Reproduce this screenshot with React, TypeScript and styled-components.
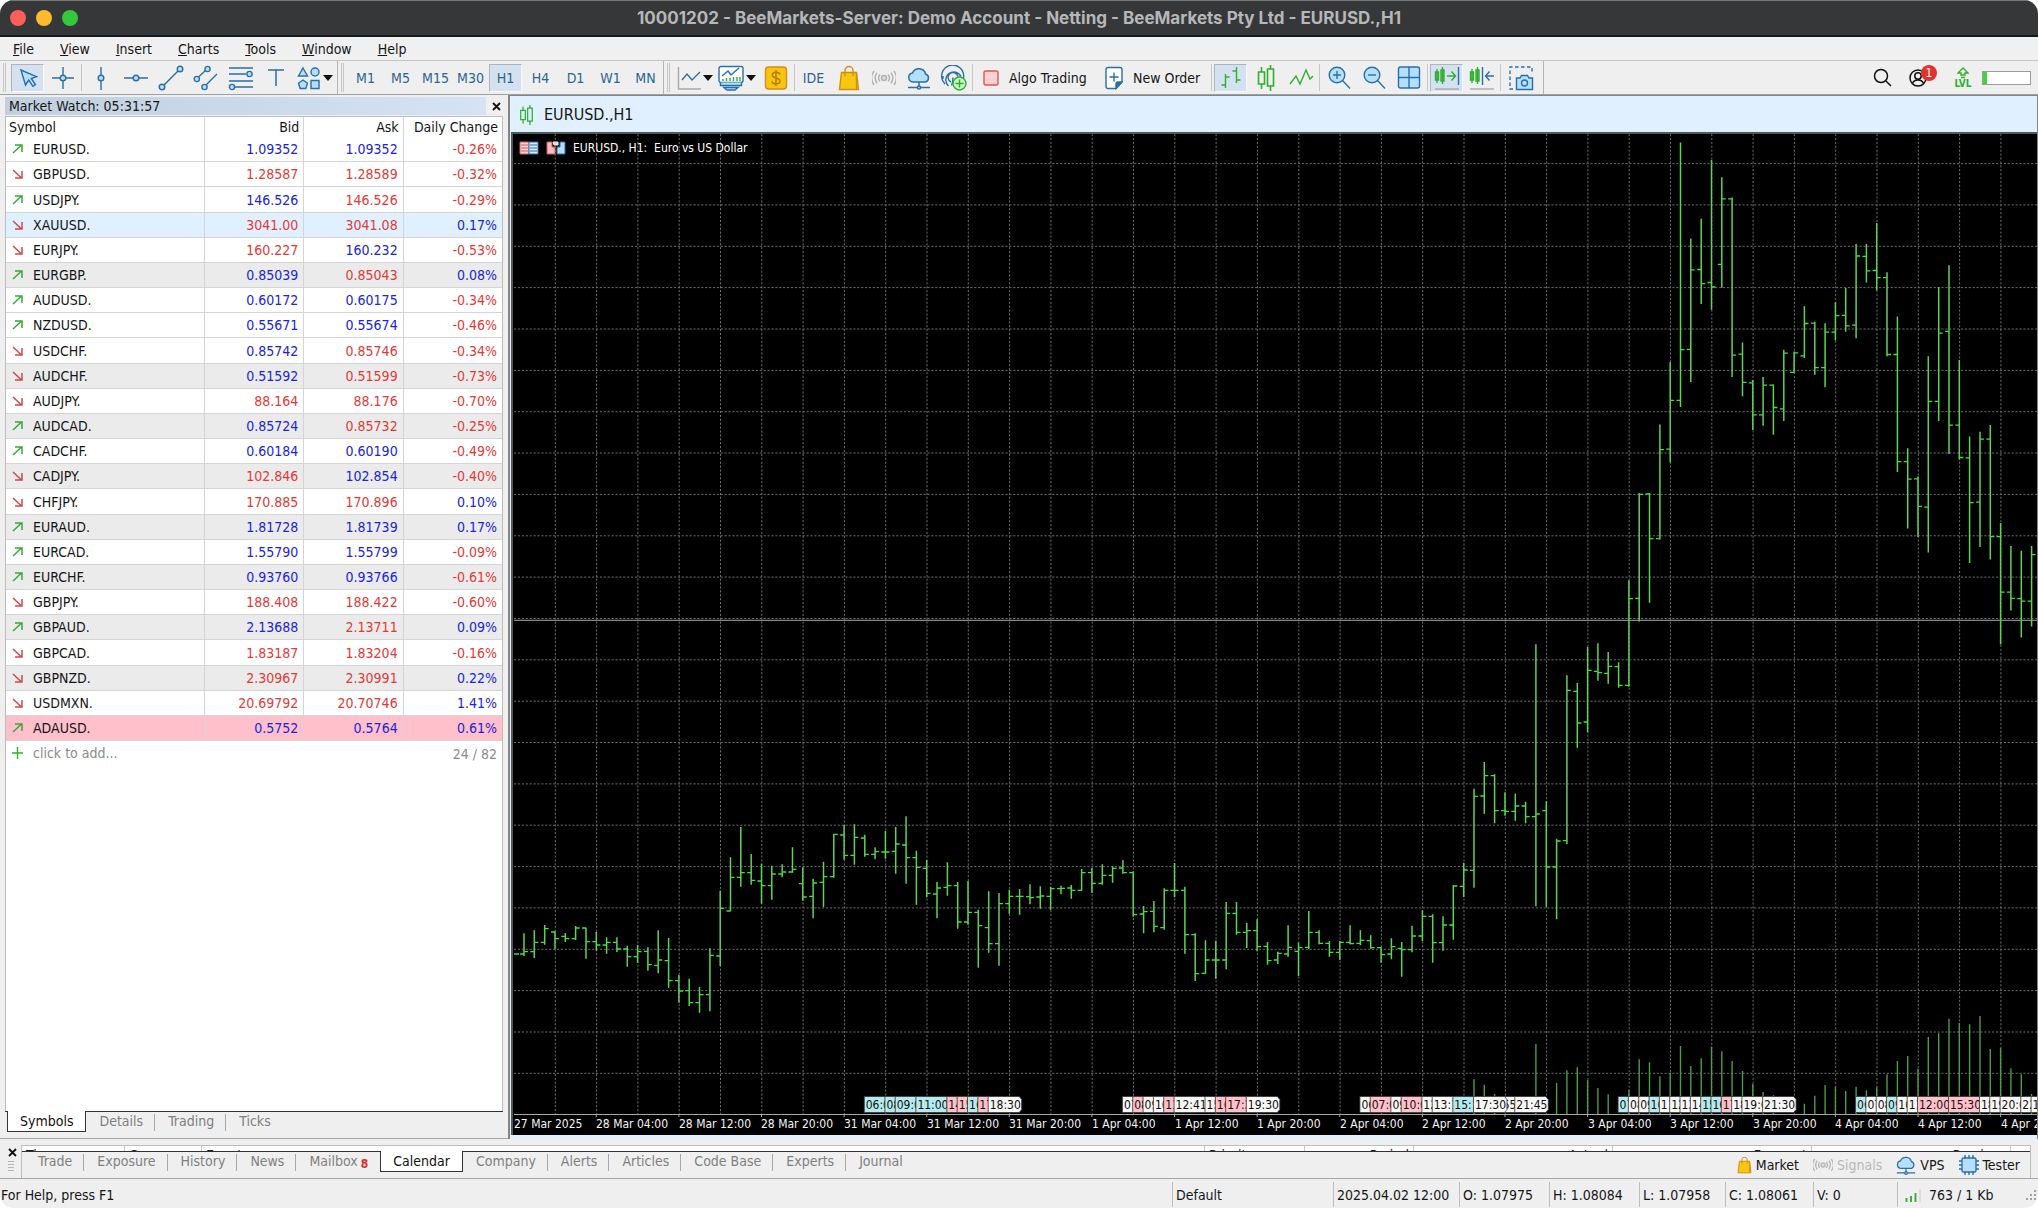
import React from "react";
import styled, { createGlobalStyle, css } from "styled-components";

const UI_FONT = `"DejaVu Sans Condensed", "Noto Sans", sans-serif`;
const BLUE = "#2a6fa8";
const SKY = "#b5e0fd";
const GREEN = "#2fae2f";
const LINE = "#b4b4b4";
const CHROME = "#efefef";

const GlobalStyle = createGlobalStyle`
  *, *::before, *::after { box-sizing: border-box; }
  body { margin: 0; background: #fff; }
  button, input { font: inherit; color: inherit; }
  svg { display: block; flex: none; }
`;

const Window = styled.div`
  display: flex;
  flex-direction: column;
  height: 100vh;
  overflow: hidden;
  border-radius: 14px;
  background: ${CHROME};
  color: #161616;
  font-family: ${UI_FONT};
  font-size: 14px;
  line-height: 18px;
`;

/* ---------- title bar ---------- */

const TitleBar = styled.header`
  display: grid;
  grid-template-columns: 1fr auto 1fr;
  align-items: center;
  height: 37px;
  padding: 0 10px;
  background: #363739;
  border-top: 1px solid #77797b;
  border-bottom: 2px solid #15191c;
`;

const Lights = styled.div`
  display: flex;
  gap: 10px;
`;

const Light = styled.button<{ $c: string }>`
  width: 16px;
  height: 16px;
  padding: 0;
  border: 0;
  border-radius: 50%;
  background: ${(p) => p.$c};
`;

const Title = styled.h1`
  margin: 0;
  font: 700 17px/20px Inter, sans-serif;
  color: #b6b7b8;
`;

/* ---------- menu ---------- */

const MenuBar = styled.nav`
  display: flex;
  height: 24px;
  align-items: center;
  padding-left: 1px;
  background: #f0f0f0;
  border-bottom: 1px solid #c4c4c4;
`;

const MenuItem = styled.button`
  border: 0;
  background: none;
  padding: 0 12px;
  height: 22px;
  margin-right: 2px;
  &::first-letter { text-decoration: underline; }
`;

/* ---------- toolbar ---------- */

const Toolbar = styled.div`
  display: flex;
  height: 34px;
  background: ${CHROME};
  border-bottom: 1px solid #a0a0a0;
`;

const ToolGroup = styled.div<{ $lead: number; $tail: number }>`
  display: flex;
  align-items: center;
  padding-left: ${(p) => p.$lead}px;
  padding-right: ${(p) => p.$tail}px;
  border-right: 1px solid ${LINE};
  background: linear-gradient(#c4c4c4, #c4c4c4) 3px 2px / 1px 29px no-repeat,
    linear-gradient(#c4c4c4, #c4c4c4) 5px 2px / 1px 29px no-repeat;
`;

const Tool = styled.button<{ $on?: boolean; $w?: number; $left?: boolean }>`
  display: flex;
  align-items: center;
  justify-content: ${(p) => (p.$left ? "flex-start" : "center")};
  gap: ${(p) => (p.$left ? 10 : 2)}px;
  width: ${(p) => p.$w ?? 33}px;
  height: 28px;
  margin: 0 1px;
  padding: 0 ${(p) => (p.$left ? 7 : 0)}px;
  border: 1px solid transparent;
  background: none;
  white-space: nowrap;
  ${(p) =>
    p.$on &&
    css`
      background: #d3e1f1;
      border-color: #b0b4b8 #f8f8f8 #f8f8f8 #b0b4b8;
    `}
`;

const BlueTool = styled(Tool)`
  color: #2b6592;
`;

const Sep = styled.i`
  width: 1px;
  height: 27px;
  margin: 0 1px;
  background: #c6c6c6;
`;

const Caret = styled.i`
  border: 5px solid transparent;
  border-top: 6px solid #111;
  border-bottom: 0;
`;

const Account = styled.div`
  display: flex;
  align-items: center;
  margin-left: auto;
  padding-right: 7px;
`;

const AccountButton = styled.button<{ $gap: number }>`
  position: relative;
  padding: 0;
  border: 0;
  background: none;
  margin-right: ${(p) => p.$gap}px;
`;

const Badge = styled.span`
  position: absolute;
  left: 12px;
  top: -4px;
  width: 16px;
  height: 16px;
  border-radius: 50%;
  background: #e3322b;
  color: #fff;
  font-size: 12px;
  line-height: 16px;
  text-align: center;
`;

const Level = styled.button`
  display: flex;
  flex-direction: column;
  align-items: center;
  width: 20px;
  margin-right: 9px;
  padding: 0;
  border: 0;
  background: none;
  color: ${GREEN};
  font-size: 10px;
  font-weight: 700;
  line-height: 10px;
`;

const Meter = styled.progress`
  appearance: none;
  width: 49px;
  height: 14px;
  border: 1px solid #9c9c9c;
  background: #fff;
  &::-webkit-progress-bar { background: #fff; }
  &::-webkit-progress-value { background: #45d33c; }
`;

/* ---------- workspace ---------- */

const Workspace = styled.main`
  display: grid;
  grid-template-columns: 508px 1fr;
  flex: 1;
  min-height: 0;
`;

const Watch = styled.section`
  display: flex;
  flex-direction: column;
  min-height: 0;
  padding: 2px 5px 6px;
  border-bottom: 1px solid #a6a6a6;
`;

const WatchTitle = styled.div`
  display: flex;
  justify-content: space-between;
  height: 18px;
  margin-bottom: 1px;

  h2 {
    flex: 1;
    margin: 0;
    padding-left: 4px;
    font-size: 14px;
    line-height: 18px;
    font-weight: 400;
    background: linear-gradient(90deg, #c0d0df, #d5e3f4);
  }
`;

const Close = styled.button`
  display: grid;
  place-items: center end;
  width: 17px;
  padding: 0 2px 0 0;
  border: 0;
  background: none;
`;

const WatchBody = styled.div`
  flex: 1;
  min-height: 0;
  overflow: hidden;
  background: #fff;
  border: 1px solid #bdbdbd;
  border-width: 1px 1px 0 1px;
`;

const Quotes = styled.table`
  width: 100%;
  table-layout: fixed;
  border-collapse: separate;
  border-spacing: 0;

  col:first-child { width: 198px; }

  th {
    height: 20px;
    padding: 0 4px;
    font-weight: 400;
    text-align: right;
    border-left: 1px solid #d4d4d4;
    white-space: nowrap;
  }
  td {
    padding: 0 5px;
    text-align: right;
    border-left: 1px solid #d4d4d4;
    border-bottom: 1px solid #d4d4d4;
  }
  th:first-child, td:first-child { border-left: 0; text-align: left; }
  th:first-child { padding-left: 3px; }
  td:first-child { padding-left: 6px; }
`;

const QuoteRow = styled.tr<{ $bg: string }>`
  height: 25px;
  background: ${(p) => p.$bg};
  &:nth-child(6n + 3) { height: 26px; }
`;

const AddRow = styled.tr`
  height: 25px;
  color: #8a8a8a;
  && td { border: 0; }
  button { padding: 0; border: 0; background: none; }
`;

const Price = styled.td<{ $up: boolean }>`
  color: ${(p) => (p.$up ? "#2024d8" : "#e13a35")};
`;

const Symbol = styled.span`
  display: flex;
  align-items: center;
  gap: 10px;
`;

/* ---------- tabs ---------- */

const TabStrip = styled.div<{ $inset: number }>`
  display: flex;
  height: 21px;
  padding-left: ${(p) => p.$inset}px;
  border-top: 1px solid #333;
`;

const Tab = styled.button<{ $on?: boolean; $sep?: boolean }>`
  position: relative;
  display: flex;
  gap: 3px;
  height: 21px;
  margin-top: -1px;
  padding: 0 12px 0 13px;
  border: 0;
  background: none;
  color: #808080;
  line-height: 20px;
  white-space: nowrap;
  ${(p) =>
    p.$sep &&
    css`
      &::after {
        content: "";
        position: absolute;
        right: 0;
        top: 3px;
        width: 1px;
        height: 17px;
        background: #a8a8a8;
      }
    `}
  ${(p) =>
    p.$on &&
    css`
      padding: 0 12px;
      background: #fff;
      color: #111;
      border: 1px solid #333;
      border-top: 0;
    `}
`;

const MailCount = styled.b`
  color: #dd2a2a;
  font-size: 12px;
  line-height: 26px;
`;

/* ---------- chart window ---------- */

const ChartWindow = styled.section`
  display: flex;
  flex-direction: column;
  min-width: 0;
  min-height: 0;
  border: 1px solid #858585;
  border-width: 1px 1px 0 2px;
  background: #e0f0fe;
`;

const ChartHead = styled.div`
  display: flex;
  align-items: center;
  gap: 10px;
  height: 36px;
  padding: 2px 0 0 9px;

  h2 {
    margin: 0;
    font-size: 16px;
    line-height: 20px;
    font-weight: 400;
  }
`;

const ChartBody = styled.div`
  position: relative;
  flex: 1;
  min-height: 0;
  margin: 0 0 4px 1px;
  overflow: hidden;
  background: #000;
  border: solid #50585a;
  border-width: 2px 0 0 2px;
`;

const ChartSvg = styled.svg`
  width: 100%;
  height: 100%;
`;

const ChartCaption = styled.div`
  position: absolute;
  left: 6px;
  top: 5px;
  display: flex;
  align-items: center;
  gap: 7px;
  color: #fff;
  font-size: 12px;
  line-height: 18px;
  white-space: pre;
`;

/* ---------- toolbox dock ---------- */

const Dock = styled.section`
  display: grid;
  grid-template-columns: 21px 1fr;
  height: 40px;
  padding: 6px 7px 0 0;
  border-bottom: 1px solid #a6a6a6;
`;

const DockSide = styled.div`
  display: flex;
  flex-direction: column;
  align-items: center;
  gap: 3px;
  padding-top: 3px;
`;

const DockMain = styled.div`
  min-width: 0;
  border: solid #bdbdbd;
  border-width: 1px 1px 0 1px;
`;

const Peek = styled.div`
  display: grid;
  grid-template-columns: 103px 77px 1fr 100px 109px 199px 199px 199px 19px;
  height: 5px;
  overflow: hidden;
  background: #fff;
`;

const PeekCell = styled.span<{ $right?: boolean }>`
  padding: 0 4px;
  text-align: ${(p) => (p.$right ? "right" : "left")};
  border-right: 1px solid #c8c8c8;
`;

const DockRow = styled.div`
  display: flex;
  justify-content: space-between;
  border-top: 1px solid #333;
`;

const DockTabs = styled(TabStrip)`
  border-top-color: transparent;
  margin-top: -1px;
`;

const DockLinks = styled.div`
  display: flex;
  align-items: center;
  gap: 14px;
  padding-right: 10px;
  height: 26px;
`;

const DockLink = styled.button<{ $off?: boolean }>`
  display: flex;
  align-items: center;
  gap: 4px;
  padding: 0;
  border: 0;
  background: none;
  color: ${(p) => (p.$off ? "#b8b8b8" : "#161616")};
`;

/* ---------- status bar ---------- */

const Status = styled.footer`
  display: grid;
  grid-template-columns: 1fr 161px 126px 90px 90px 86px 88px 84px 141px;
  height: 29px;
  padding: 3px 0 0 1px;
`;

const Cell = styled.span<{ $first?: boolean }>`
  display: flex;
  align-items: center;
  gap: 7px;
  height: 25px;
  padding-left: ${(p) => (p.$first ? 0 : 3)}px;
  border-left: ${(p) => (p.$first ? 0 : 1)}px solid #bdbdbd;
  white-space: nowrap;
`;

const LastCell = styled(Cell)`
  justify-content: space-between;
  padding-left: 7px;
  span { display: flex; align-items: center; gap: 7px; }
`;

/* ---------- icons ---------- */

const Icon = ({ w = 26, h = 26, children, c = BLUE, sw = 1.4 }: any) => (
  <svg width={w} height={h} viewBox={`0 0 ${w} ${h}`} fill="none" stroke={c} strokeWidth={sw} aria-hidden="true">
    {children}
  </svg>
);

const Cross = () => (
  <Icon w={9} h={9} c="#111" sw={1.8}><path d="M1 1l7 7M8 1l-7 7" /></Icon>
);
const Pointer = () => (
  <Icon><path d="M6 5l4.500 15 3.200-5 4.200 6.300 2.600-1.800-4.200-6 5.200-1.800z" fill={SKY} /></Icon>
);
const Crosshair = () => (
  <Icon><path d="M13 2v8M13 16v8M2 13h8M16 13h8" /><circle cx="13" cy="13" r="2.800" fill={SKY} /></Icon>
);
const VLine = () => (
  <Icon><path d="M13 2v8M13 16v9" /><circle cx="13" cy="13" r="2.800" fill={SKY} /></Icon>
);
const HLine = () => (
  <Icon><path d="M1 13h9M16 13h9" /><circle cx="13" cy="13" r="2.800" fill={SKY} /></Icon>
);
const Trend = () => (
  <Icon><path d="M6 20L20 6" /><circle cx="4" cy="22" r="2.800" fill={SKY} /><circle cx="22" cy="4" r="2.800" fill={SKY} /></Icon>
);
const Channel = () => (
  <Icon>
    <path d="M5 12.500l7.500-7M13 20L24 9" />
    <circle cx="3.800" cy="14" r="2.600" fill={SKY} /><circle cx="14.500" cy="4" r="2.600" fill={SKY} /><circle cx="11.500" cy="22" r="2.600" fill={SKY} />
  </Icon>
);
const Fibo = () => (
  <Icon>
    <path d="M1 3h24M1 9h17M1 16h24M7 22h18" /><circle cx="21.500" cy="9" r="2.600" fill={SKY} /><circle cx="4" cy="22" r="2.600" fill={SKY} />
  </Icon>
);
const TextTool = () => <Icon sw={1.5}><path d="M5 5h16M13 5v16" /></Icon>;
const Shapes = () => (
  <Icon w={24}>
    <g fill={SKY}>
      <path d="M6 3l4.500 8h-9z" /><circle cx="18" cy="7" r="4" /><path d="M6 15l4.500 3.200-1.700 5.300H3.200L1.500 18.200z" /><path d="M14 15.500h8v8h-8z" />
    </g>
  </Icon>
);
const LineStudy = () => (
  <Icon w={24}><path d="M1.500 2v22H24" stroke="#a8a8a8" /><path d="M5 15l5-6 5 6 8-8" /></Icon>
);
const Template = () => (
  <Icon w={26}>
    <rect x="1" y="1.500" width="24" height="16" rx="2" fill="#fff" />
    <path d="M4 11l6-5 3 4 8-7" />
    <path d="M5 16v-2M8.500 16v-3M12 16v-3M15.500 16v-4M19 16v-4M22 16v-4" stroke={GREEN} />
    <path d="M2.500 17.500v3h21v-3M6 22.500h14l-3 2.500H9z" fill={SKY} />
  </Icon>
);
const Dollar = () => (
  <Icon w={24}>
    <rect x="1.500" y="2" width="21" height="22" rx="3" fill="#f8c50c" stroke="#d19018" />
    <path d="M16 9.500c-.5-1.700-2-2.300-4-2.300-2.200 0-3.800 1-3.800 2.800C8.200 14 16 12 16 16c0 1.900-1.700 2.900-4 2.900s-3.800-.9-4.200-2.600M12 5v16" stroke="#b27a10" />
  </Icon>
);
const Bag = ({ w = 22, h = 26 }: { w?: number; h?: number }) => (
  <svg width={w} height={h} viewBox="0 0 22 26" fill="none" strokeWidth="1.4" stroke="#cf8f17" aria-hidden="true">
    <path d="M3.500 7.500h15l2 17h-19z" fill="#f9c80e" />
    <path d="M7 11V5.500a4 4 0 0 1 8 0V11" />
    <path d="M18.500 8v16" />
  </svg>
);
const Signal = ({ w = 24 }: { w?: number }) => (
  <svg width={w} height={w} viewBox="0 0 24 24" fill="none" stroke="#b4b4b4" strokeWidth="1.5" aria-hidden="true">
    <circle cx="12" cy="12" r="2.500" fill="#ddd" />
    <path d="M8 8.500a5.500 5.500 0 0 0 0 7M16 8.500a5.500 5.500 0 0 1 0 7M5 6.800a9 9 0 0 0 0 10.400M19 6.800a9 9 0 0 1 0 10.400M2 5a12 12 0 0 0 0 14M22 5a12 12 0 0 1 0 14" />
  </svg>
);
const Cloud = ({ w = 24 }: { w?: number }) => (
  <svg width={w} height={w} viewBox="0 0 24 24" fill="none" stroke={BLUE} strokeWidth="1.5" aria-hidden="true">
    <path d="M6 16a4.500 4.500 0 0 1-.6-8.900A7 7 0 0 1 18.600 8 4.200 4.200 0 0 1 18.500 16z" fill={SKY} />
    <path d="M12 16v4M1 21.500h9M14 21.500h9" /><circle cx="12" cy="21.500" r="1.600" fill={SKY} />
  </svg>
);
const Fingerprint = () => (
  <Icon>
    <path d="M4 19A11 11 0 1 1 22.500 13M7.500 21A8 8 0 1 1 20 11.500M10 17a5 5 0 1 1 7-5.500M12 12.500c0 4-.5 6-1.500 8M2 14V11" />
    <circle cx="18.500" cy="18.500" r="6.500" fill="#c9f5c2" stroke={GREEN} />
    <path d="M18.500 14.500v8M14.500 18.500h8" stroke={GREEN} />
  </Icon>
);
const Stop = () => (
  <Icon w={16} h={16}><rect x="1" y="1" width="14" height="14" rx="1.500" fill="#fcd0d0" stroke="#d95656" /></Icon>
);
const Order = () => (
  <Icon w={18} h={24}>
    <path d="M3 1.500h12a2 2 0 0 1 2 2V16l-6 6.500H3a2 2 0 0 1-2-2v-17a2 2 0 0 1 2-2z" fill="#fff" />
    <path d="M17 16h-4a2 2 0 0 0-2 2v4.500z" fill={BLUE} /><path d="M9 6.500v9M4.500 11h9" />
  </Icon>
);
const BarsIcon = () => (
  <Icon c={GREEN}><path d="M7.500 9v14M7.500 12h4M3.500 20h4M18.500 2v16M14.500 6h4M18.500 15h4" /></Icon>
);
const Candles = ({ w = 20, h = 26 }: { w?: number; h?: number }) => (
  <svg width={w} height={h} viewBox="4 0 18 26" fill="none" stroke={GREEN} strokeWidth="1.600" aria-hidden="true">
    <path d="M8.500 2v5M8.500 19v5M17.500 0v4M17.500 21v5M5.500 7h6v12h-6zM14.500 4h6v17h-6z" />
  </svg>
);
const Zigzag = () => (
  <Icon c={GREEN}><path d="M2 19l6-8 4 8 6-14 4 9 3-3" /></Icon>
);
const Zoom = ({ plus }: { plus?: boolean }) => (
  <Icon><circle cx="11" cy="10" r="7.800" fill={SKY} /><path d="M16.500 15.500l7.500 8" /><path d={plus ? "M11 6v8M7 10h8" : "M7 10h8"} /></Icon>
);
const Tiles = () => (
  <Icon w={24}><rect x="1.500" y="2" width="21" height="21" rx="2" fill={SKY} /><path d="M12 2v21M1.500 12.500h21" /></Icon>
);
const ShiftEnd = () => (
  <Icon>
    <path d="M3 4v14M8.500 2v17M1.500 7h3v8h-3zM7 5h3v11H7z" stroke={GREEN} />
    <path d="M13 11h8M17.500 6.500l4 4.500-4 4.500" stroke={GREEN} /><path d="M24.500 2v18" /><path d="M1 24h24" stroke="#ababab" />
  </Icon>
);
const AutoScroll = () => (
  <Icon>
    <path d="M3 4v14M8.500 2v17M1.500 7h3v8h-3zM7 5h3v11H7z" stroke={GREEN} />
    <path d="M13.500 2v18M25 11h-8M20.500 6.500l-4 4.500 4 4.500" /><path d="M1 24h24" stroke="#ababab" />
  </Icon>
);
const Camera = () => (
  <Icon>
    <path d="M5 24H2V2h22v7" strokeDasharray="3.500 2.500" />
    <path d="M9 13h3l1.500-2.500h6L21 13h3.500v11.500H8.500V13z" fill={SKY} /><circle cx="16.500" cy="18" r="3" />
  </Icon>
);
const Chip = () => (
  <svg width="20" height="20" viewBox="0 0 20 20" fill="none" stroke={BLUE} strokeWidth="1.400" aria-hidden="true">
    <path d="M6 0v20M10 0v20M14 0v20M0 6h20M0 10h20M0 14h20" /><rect x="3" y="3" width="14" height="14" rx="1.500" fill={SKY} />
  </svg>
);
const UpArrow = ({ up }: { up: boolean }) => (
  <Icon w={11} h={10} c={up ? "#38a838" : "#cc4b4b"} sw={1.5}>
    {up ? <path d="M1 9L9.500 1M3 1h7v7" /> : <path d="M1 1l8.500 8M10 2v7H3" />}
  </Icon>
);

/* ---------- data ---------- */

// symbol, trend up, bid, bid up, ask, ask up, change, row colour
type Quote = [string, 0 | 1, string, 0 | 1, string, 0 | 1, string, string?];
const G = "#ebebeb";
const QUOTES: Quote[] = [
  ["EURUSD.", 1, "1.09352", 1, "1.09352", 1, "-0.26%"],
  ["GBPUSD.", 0, "1.28587", 0, "1.28589", 0, "-0.32%"],
  ["USDJPY.", 1, "146.526", 1, "146.526", 0, "-0.29%"],
  ["XAUUSD.", 0, "3041.00", 0, "3041.08", 0, "0.17%", "#e0f0fe"],
  ["EURJPY.", 0, "160.227", 0, "160.232", 1, "-0.53%"],
  ["EURGBP.", 1, "0.85039", 1, "0.85043", 0, "0.08%", G],
  ["AUDUSD.", 1, "0.60172", 1, "0.60175", 1, "-0.34%"],
  ["NZDUSD.", 1, "0.55671", 1, "0.55674", 1, "-0.46%"],
  ["USDCHF.", 0, "0.85742", 1, "0.85746", 0, "-0.34%"],
  ["AUDCHF.", 0, "0.51592", 1, "0.51599", 0, "-0.73%", G],
  ["AUDJPY.", 0, "88.164", 0, "88.176", 0, "-0.70%"],
  ["AUDCAD.", 1, "0.85724", 1, "0.85732", 0, "-0.25%", G],
  ["CADCHF.", 1, "0.60184", 1, "0.60190", 1, "-0.49%"],
  ["CADJPY.", 0, "102.846", 0, "102.854", 1, "-0.40%", G],
  ["CHFJPY.", 0, "170.885", 0, "170.896", 0, "0.10%"],
  ["EURAUD.", 1, "1.81728", 1, "1.81739", 1, "0.17%", G],
  ["EURCAD.", 1, "1.55790", 1, "1.55799", 1, "-0.09%"],
  ["EURCHF.", 1, "0.93760", 1, "0.93766", 1, "-0.61%", G],
  ["GBPJPY.", 0, "188.408", 0, "188.422", 0, "-0.60%"],
  ["GBPAUD.", 1, "2.13688", 1, "2.13711", 0, "0.09%", G],
  ["GBPCAD.", 0, "1.83187", 0, "1.83204", 0, "-0.16%"],
  ["GBPNZD.", 0, "2.30967", 0, "2.30991", 0, "0.22%", G],
  ["USDMXN.", 0, "20.69792", 0, "20.70746", 0, "1.41%"],
  ["ADAUSD.", 1, "0.5752", 1, "0.5764", 1, "0.61%", "#ffc0cb"],
];

// Runs of price bars: offset and scale of the run, then high, low, open, close per bar.
const RUNS: { top: number; k: number; bars: number[][] }[] = [
  {
    top: 780, k: 3, bars: [
      [460, 528, 522, 515], [451, 534, 515, 487], [435, 494, 487, 446], [454, 507, 456, 476], [459, 486, 469, 476],
      [438, 480, 476, 444], [443, 536, 444, 485], [456, 512, 485, 495], [472, 521, 495, 487], [472, 516, 487, 507],
      [497, 560, 507, 530], [495, 549, 530, 515], [502, 572, 514, 554], [451, 580, 556, 540], [474, 623, 542, 602],
      [585, 668, 602, 633], [596, 678, 632, 668], [621, 698, 668, 644], [505, 694, 644, 526], [332, 558, 528, 385],
      [232, 394, 393, 292], [141, 320, 292, 278], [222, 314, 278, 301], [251, 371, 303, 317], [257, 359, 317, 282],
      [253, 292, 282, 276], [202, 278, 276, 268], [262, 362, 311, 351], [296, 415, 349, 309], [245, 381, 307, 290],
      [162, 293, 290, 163], [135, 239, 165, 226], [133, 254, 226, 172], [164, 230, 174, 223], [202, 238, 223, 215],
      [153, 236, 216, 216], [141, 281, 214, 192], [109, 311, 195, 233], [212, 374, 233, 262], [240, 352, 265, 340],
      [306, 415, 342, 324], [247, 347, 322, 317], [306, 446, 317, 426], [303, 434, 426, 397], [389, 563, 397, 437],
      [334, 518, 443, 491], [339, 557, 491, 371], [329, 401, 371, 349], [327, 404, 349, 349],
    ],
  },
  {
    top: 760, k: 3, bars: [
      [373, 433, 410, 413], [379, 446, 411, 408], [380, 450, 409, 386], [377, 403, 386, 385], [375, 416, 384, 391],
      [327, 392, 391, 338], [324, 398, 338, 370], [313, 374, 370, 346], [319, 368, 346, 325], [301, 341, 324, 338],
      [334, 470, 338, 464], [438, 520, 462, 455], [423, 517, 454, 499], [385, 509, 503, 391], [309, 412, 391, 391],
      [380, 581, 391, 524], [520, 663, 524, 641], [541, 641, 640, 600], [542, 656, 600, 600], [426, 628, 600, 460],
      [426, 524, 460, 517], [489, 564, 517, 512], [478, 574, 512, 560], [546, 614, 559, 602], [575, 612, 600, 580],
      [496, 590, 582, 562], [548, 648, 574, 563], [453, 568, 562, 517], [511, 553, 517, 550], [543, 590, 550, 577],
      [543, 600, 577, 547], [496, 553, 547, 551], [511, 556, 550, 541], [526, 566, 542, 563], [562, 608, 563, 584],
      [535, 598, 582, 560], [546, 650, 565, 569], [497, 577, 569, 528], [451, 543, 528, 469], [463, 608, 469, 548],
      [469, 572, 548, 495], [375, 539, 495, 378], [308, 411, 379, 330], [86, 383, 331, 109], [6, 161, 108, 47],
      [43, 190, 47, 152],
    ],
  },
  {
    top: 630, k: 3, bars: [
      [487, 557, 542, 544], [491, 572, 544, 528], [515, 580, 528, 560], [43, 829, 560, 552], [514, 830, 542, 711],
      [626, 868, 711, 633], [136, 642, 632, 181], [159, 353, 184, 279], [51, 307, 276, 121], [40, 152, 124, 128],
      [66, 161, 130, 109], [97, 173, 110, 166], [-149, 170, 166, -94],
    ],
  },
  {
    top: 130, k: 2.904, bars: [
      [1055, 1427, 1360, 1058], [1054, 1373, 1057, 1187], [855, 1189, 1187, 928], [674, 966, 927, 785], [36, 804, 785, 638],
      [315, 732, 637, 406], [258, 505, 405, 446], [87, 522, 443, 456], [137, 458, 390, 200], [196, 717, 200, 654],
      [617, 773, 651, 733], [726, 871, 734, 827], [717, 859, 827, 741], [739, 885, 741, 806], [638, 845, 810, 648],
      [643, 705, 704, 647], [512, 662, 656, 562], [557, 711, 561, 690], [561, 747, 690, 587], [500, 611, 587, 539],
      [459, 586, 538, 569], [331, 605, 567, 366], [331, 443, 367, 409], [270, 466, 408, 429], [413, 657, 429, 652],
      [542, 993, 652, 963], [924, 1157, 963, 1014], [1006, 1182, 1013, 1093], [657, 1227, 1095, 788], [456, 845, 788, 590],
      [393, 941, 585, 857], [668, 957, 857, 951], [890, 1257, 952, 1082], [876, 1211, 1081, 898], [857, 1247, 898, 1181],
      [1141, 1494, 1181, 1342], [1208, 1395, 1342, 1360], [1222, 1474, 1361, 1368], [1208, 1442, 1368, 1233],
    ],
  },
];

const VOLUMES: Record<number, number> = {
  92: 267, 93: 284, 94: 312, 98: 162, 100: 279, 101: 241, 102: 232, 103: 270, 104: 294, 105: 313, 107: 299, 108: 208,
  109: 217, 110: 259, 111: 248, 112: 168, 113: 228, 114: 205, 115: 170, 116: 184, 117: 213, 118: 243, 119: 282,
  120: 306, 121: 316, 124: 341, 125: 317, 126: 285, 127: 291, 128: 303, 129: 290, 130: 301, 131: 292, 132: 253,
  133: 213, 134: 198, 135: 236, 136: 141, 137: 130, 138: 86, 139: 99, 140: 103, 141: 78, 142: 177, 143: 174,
  144: 235, 145: 253, 146: 312,
};

const W = "#f7f7f7";
const P = "#ffc0cb";
const C = "#b5ebee";
const EVENTS: [number, string, string][] = [
  [33, "06:00", C], [35, "08:00", C], [36, "09:00", C], [38, "11:00", C], [41, "14:00", P], [42, "15:00", P],
  [43, "16:00", C], [44, "17:00", P], [45, "18:30", W],
  [58, "07:00", W], [59, "08:00", P], [60, "09:00", W], [61, "10:00", W], [62, "11:00", P], [63, "12:41", W],
  [66, "15:00", W], [67, "16:00", P], [68, "17:30", P], [70, "19:30", W],
  [81, "06:00", W], [82, "07:00", P], [84, "09:00", W], [85, "10:00", P], [87, "12:00", W], [88, "13:15", W],
  [90, "15:15", C], [93, "18:55", W], [92, "17:30", W], [96, "21:45", W],
  [106, "07:00", C], [107, "08:00", W], [108, "09:00", W], [109, "10:00", C], [110, "11:00", W], [111, "12:00", W],
  [112, "13:00", W], [113, "14:00", W], [114, "15:00", C], [115, "16:00", C], [116, "17:00", P], [117, "18:00", W],
  [118, "19:00", W], [120, "21:30", W],
  [129, "06:00", C], [130, "07:00", W], [131, "08:00", W], [132, "09:00", C], [133, "10:00", W], [134, "11:00", W],
  [135, "12:00", P], [138, "15:30", P], [141, "18:00", W], [142, "19:00", W], [143, "20:00", W], [145, "22:00", W],
  [146, "10:00", W],
];

const DATES = [
  "28 Mar 04:00", "28 Mar 12:00", "28 Mar 20:00", "31 Mar 04:00", "31 Mar 12:00", "31 Mar 20:00", "1 Apr 04:00",
  "1 Apr 12:00", "1 Apr 20:00", "2 Apr 04:00", "2 Apr 12:00", "2 Apr 20:00", "3 Apr 04:00", "3 Apr 12:00",
  "3 Apr 20:00", "4 Apr 04:00", "4 Apr 12:00", "4 Apr 20:00",
];

const barX = (i: number) => 524 + i * 10.326;

const PriceChart = () => {
  let stems = "";
  let ticks = "M514 954h5";
  let i = 0;
  for (const run of RUNS) {
    for (const bar of run.bars) {
      const [h, l, o, c] = bar.map((v) => (run.top + v / run.k).toFixed(1));
      const x = barX(i).toFixed(1);
      stems += `M${x} ${h}V${l}`;
      ticks += `M${x} ${o}h-4M${x} ${c}h4`;
      i += 1;
    }
  }
  let grid = "";
  for (let k = 0; k < 36; k++) grid += `M${(barX(3 + 4 * k) + 0.3).toFixed(1)} 134V1114`;
  for (let k = 0; k < 23; k++) grid += `M514 ${(163.6 + 41.35 * k).toFixed(1)}H2040`;
  const volumes = Object.entries(VOLUMES)
    .map(([n, top]) => `M${barX(+n).toFixed(1)} ${(990 + top / 3).toFixed(1)}V1114`)
    .join("");

  return (
    <ChartSvg role="img" aria-label="EURUSD hourly price bars">
      <g transform="translate(-513 -134)" fill="none">
        <path d={grid} stroke="#6c6c6c" strokeWidth="1" strokeDasharray="2.200 1.700" />
        <path d="M514 620.400H2040" stroke="#858585" strokeWidth="1.300" />
        <path d={volumes} stroke="#4d9c47" strokeWidth="1.400" />
        <path d={stems} stroke="#62d058" strokeWidth="1.500" />
        <path d={ticks} stroke="#3fe23a" strokeWidth="1.300" />
        <path d="M514 1114.500H2040" stroke="#a8a8a8" />
        {EVENTS.map(([n, label, fill]) => (
          <g key={n}>
            <path d={`M${barX(n) - 0.5} 1096.500h31l2.500 3v10l-2.500 3h-31z`} fill={fill} stroke="#333" strokeWidth="0.800" />
            <text x={barX(n) + 1} y="1109" fontSize="12" fill="#111">{label}</text>
          </g>
        ))}
        <g fill="#f4f4f4" fontSize="12">
          <text x="514" y="1128">27 Mar 2025</text>
          {DATES.map((d, n) => (
            <React.Fragment key={d}>
              <path d={`M${barX(7 + 8 * n)} 1114v3`} stroke="#a8a8a8" />
              <text x={Math.round(barX(7 + 8 * n))} y="1128">{d}</text>
            </React.Fragment>
          ))}
        </g>
      </g>
    </ChartSvg>
  );
};

const DOCK_TABS = [
  "Trade", "Exposure", "History", "News", "Mailbox", "Calendar", "Company", "Alerts", "Articles", "Code Base", "Experts", "Journal",
];

export default function App() {
  return (
    <Window>
      <GlobalStyle />
      <TitleBar>
        <Lights>
          <Light $c="#fb5f57" aria-label="Close" />
          <Light $c="#fcbb2e" aria-label="Minimize" />
          <Light $c="#34c83b" aria-label="Zoom" />
        </Lights>
        <Title>10001202 - BeeMarkets-Server: Demo Account - Netting - BeeMarkets Pty Ltd - EURUSD.,H1</Title>
      </TitleBar>

      <MenuBar>
        {["File", "View", "Insert", "Charts", "Tools", "Window", "Help"].map((m) => (
          <MenuItem key={m}>{m}</MenuItem>
        ))}
      </MenuBar>

      <Toolbar>
        <ToolGroup $lead={10} $tail={0}>
          <Tool $on aria-label="Cursor"><Pointer /></Tool>
          <Tool aria-label="Crosshair"><Crosshair /></Tool>
          <Sep />
          <Tool aria-label="Vertical line"><VLine /></Tool>
          <Tool aria-label="Horizontal line"><HLine /></Tool>
          <Tool aria-label="Trendline"><Trend /></Tool>
          <Tool aria-label="Channel"><Channel /></Tool>
          <Tool aria-label="Fibonacci"><Fibo /></Tool>
          <Tool aria-label="Text"><TextTool /></Tool>
          <Tool $w={42} aria-label="Shapes"><Shapes /><Caret /></Tool>
        </ToolGroup>
        <ToolGroup $lead={10} $tail={0}>
          {["M1", "M5", "M15", "M30", "H1", "H4", "D1", "W1", "MN"].map((t) => (
            <BlueTool key={t} $on={t === "H1"}>{t}</BlueTool>
          ))}
        </ToolGroup>
        <ToolGroup $lead={10} $tail={3}>
          <Tool $w={40} aria-label="Line studies"><LineStudy /><Caret /></Tool>
          <Tool $w={40} aria-label="Templates"><Template /><Caret /></Tool>
          <Tool aria-label="Payments"><Dollar /></Tool>
          <Sep />
          <BlueTool>IDE</BlueTool>
          <Tool aria-label="Market"><Bag /></Tool>
          <Tool aria-label="Signals"><Signal /></Tool>
          <Tool aria-label="VPS"><Cloud /></Tool>
          <Tool aria-label="Copy trading"><Fingerprint /></Tool>
          <Sep />
          <Tool $w={120} $left><Stop />Algo Trading</Tool>
          <Tool $w={112} $left><Order />New Order</Tool>
          <Sep />
          <Tool $on aria-label="Bar chart"><BarsIcon /></Tool>
          <Tool aria-label="Candles"><Candles /></Tool>
          <Tool aria-label="Line chart"><Zigzag /></Tool>
          <Sep />
          <Tool aria-label="Zoom in"><Zoom plus /></Tool>
          <Tool aria-label="Zoom out"><Zoom /></Tool>
          <Tool aria-label="Tile windows"><Tiles /></Tool>
          <Sep />
          <Tool $on aria-label="Scroll to end"><ShiftEnd /></Tool>
          <Tool aria-label="Chart shift"><AutoScroll /></Tool>
          <Sep />
          <Tool $w={36} aria-label="Screenshot"><Camera /></Tool>
        </ToolGroup>
        <Account>
          <AccountButton $gap={17} aria-label="Search">
            <Icon w={19} h={19} c="#111" sw={1.5}><circle cx="8" cy="8" r="6.500" /><path d="M13 13l5 5" /></Icon>
          </AccountButton>
          <AccountButton $gap={26} aria-label="Account">
            <Icon w={18} h={18} c="#111" sw={1.5}><circle cx="9" cy="9" r="8" /><circle cx="9" cy="7" r="3.200" /><path d="M3.500 14.500c1-3 3-3.500 5.500-3.500s4.500.5 5.500 3.500" /></Icon>
            <Badge>1</Badge>
          </AccountButton>
          <Level>
            <Icon w={12} h={12} c={GREEN} sw={1.4}><path d="M6 1l5 5H8v2H4V6H1zM4 10.500h4" /></Icon>
            LVL
          </Level>
          <Meter value={8} max={100} aria-label="Level" />
        </Account>
      </Toolbar>

      <Workspace>
        <Watch>
          <WatchTitle>
            <h2>Market Watch: 05:31:57</h2>
            <Close aria-label="Close Market Watch"><Cross /></Close>
          </WatchTitle>
          <WatchBody>
            <Quotes>
              <colgroup><col /><col /><col /><col /></colgroup>
              <thead>
                <tr><th>Symbol</th><th>Bid</th><th>Ask</th><th>Daily Change</th></tr>
              </thead>
              <tbody>
                {QUOTES.map(([s, up, bid, bu, ask, au, ch, bg]) => (
                  <QuoteRow key={s} $bg={bg ?? "#fff"}>
                    <td><Symbol><UpArrow up={!!up} />{s}</Symbol></td>
                    <Price $up={!!bu}>{bid}</Price>
                    <Price $up={!!au}>{ask}</Price>
                    <Price $up={!ch.startsWith("-")}>{ch}</Price>
                  </QuoteRow>
                ))}
                <AddRow>
                  <td colSpan={3}>
                    <button>
                      <Symbol>
                        <Icon w={11} h={12} c="#38a838"><path d="M5.500 0v12M0 6h11" /></Icon>
                        click to add...
                      </Symbol>
                    </button>
                  </td>
                  <td>24 / 82</td>
                </AddRow>
              </tbody>
            </Quotes>
          </WatchBody>
          <TabStrip $inset={2}>
            <Tab $on>Symbols</Tab>
            <Tab $sep>Details</Tab>
            <Tab $sep>Trading</Tab>
            <Tab>Ticks</Tab>
          </TabStrip>
        </Watch>

        <ChartWindow>
          <ChartHead><Candles w={15} h={20} /><h2>EURUSD.,H1</h2></ChartHead>
          <ChartBody>
            <PriceChart />
            <ChartCaption>
              <Icon w={20} h={14} sw={1}>
                <path d="M1 1h9v12H1z" fill="#fbd5d5" stroke="#d95656" /><path d="M10 1h9v12h-9z" fill="#d5ecfb" />
                <path d="M2 4h7M2 7h7M2 10h7" stroke="#d95656" /><path d="M11 4h7M11 7h7M11 10h7" />
              </Icon>
              <Icon w={20} h={14} sw={1}>
                <path d="M1 1h5v5h3v7H1z" fill="#fbb" stroke="#d95656" /><path d="M19 1h-5v5h-3v7h8z" fill={SKY} />
                <path d="M7 1h5v3H8z" fill="#ddd" stroke="#eee" />
              </Icon>
              {"EURUSD., H1:  Euro vs US Dollar"}
            </ChartCaption>
          </ChartBody>
        </ChartWindow>
      </Workspace>

      <Dock>
        <DockSide>
          <Close aria-label="Close Toolbox"><Cross /></Close>
          <Icon w={6} h={12} c="#b4b4b4" sw={1}><path d="M0 1.500h6M0 4.500h6M0 7.500h6M0 10.500h6" /></Icon>
        </DockSide>
        <DockMain>
          <Peek>
            <PeekCell>Time</PeekCell><PeekCell>Currency</PeekCell><PeekCell>Event</PeekCell><PeekCell>Priority</PeekCell>
            <PeekCell $right>Period</PeekCell><PeekCell $right>Actual</PeekCell><PeekCell $right>Forecast</PeekCell>
            <PeekCell $right>Previous</PeekCell><span />
          </Peek>
          <DockRow>
            <DockTabs $inset={3}>
              {DOCK_TABS.map((t) => (
                <Tab key={t} $on={t === "Calendar"} $sep={!["Mailbox", "Calendar", "Journal"].includes(t)}>
                  {t}
                  {t === "Mailbox" && <MailCount>8</MailCount>}
                </Tab>
              ))}
            </DockTabs>
            <DockLinks>
              <DockLink><Bag w={15} h={18} />Market</DockLink>
              <DockLink $off><Signal w={20} />Signals</DockLink>
              <DockLink><Cloud w={20} />VPS</DockLink>
              <DockLink><Chip />Tester</DockLink>
            </DockLinks>
          </DockRow>
        </DockMain>
      </Dock>

      <Status>
        <Cell $first>For Help, press F1</Cell>
        <Cell>Default</Cell>
        <Cell>2025.04.02 12:00</Cell>
        <Cell>O: 1.07975</Cell>
        <Cell>H: 1.08084</Cell>
        <Cell>L: 1.07958</Cell>
        <Cell>C: 1.08061</Cell>
        <Cell>V: 0</Cell>
        <LastCell>
          <span>
            <Icon w={17} h={14} c="#3fae3f" sw={2}><path d="M1.500 14v-4M6 14V8M10.500 14V5" /><path d="M15 14V1" stroke="#ddd" /></Icon>
            763 / 1 Kb
          </span>
          <Icon w={14} h={14} c="#a0a0a0" sw={2}><path d="M11 2v12M7 6v8M3 10v4" strokeDasharray="2 2" /></Icon>
        </LastCell>
      </Status>
    </Window>
  );
}
